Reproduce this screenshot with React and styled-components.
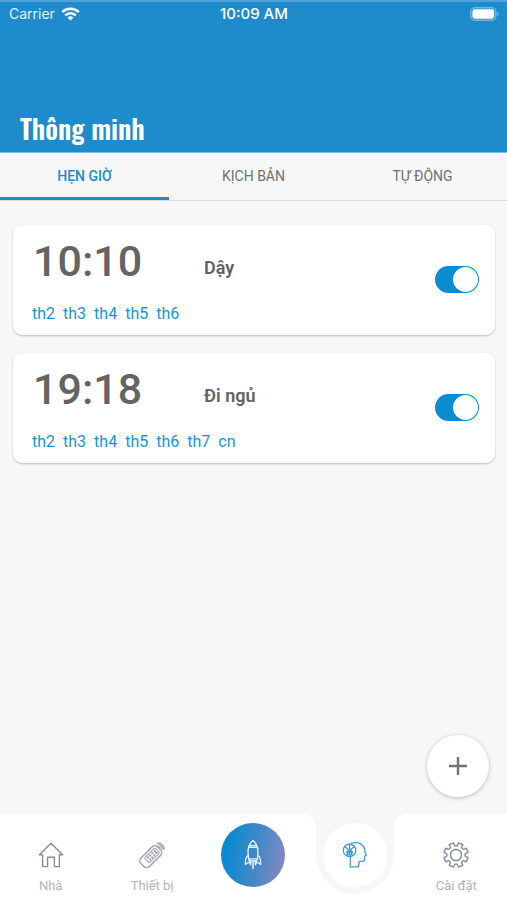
import React, { useState } from "react";
import styled, { createGlobalStyle } from "styled-components";

const blue = "#1e8bcc";
const accent = "#0a8cd3";
const canvas = "#f7f7f7";

const GlobalStyle = createGlobalStyle`
  *, *::before, *::after { box-sizing: border-box; }
  body { margin: 0; background: ${canvas}; font-family: Roboto, "Noto Sans", sans-serif; }
  button, input { font: inherit; margin: 0; }
`;

const Screen = styled.div`
  min-height: 100vh;
  display: flex;
  flex-direction: column;
`;

const Header = styled.header`
  height: 153px;
  display: flex;
  flex-direction: column;
  justify-content: space-between;
  background: ${blue};
  border-top: 2px solid #4fa5da;
  border-bottom: 1px solid #7dbce3;
`;

const StatusBar = styled.div`
  display: grid;
  grid-template-columns: 1fr auto 1fr;
  align-items: center;
  height: 24px;
  padding: 0 8px 0 9px;
  color: #fff;
  font-family: Inter, sans-serif;
  font-size: 14px;
  line-height: 24px;
`;

const Carrier = styled.span`
  display: flex;
  align-items: center;
  gap: 6px;
  color: #e4f2fb;
`;

const Clock = styled.time`
  font-size: 15px;
  font-weight: 500;
`;

const BatteryIcon = styled.svg`
  justify-self: end;
`;

const Title = styled.h1`
  margin: 0;
  padding: 0 20px 8px;
  color: #fff;
  font-family: "Oswald", "Liberation Sans Narrow", Roboto, sans-serif;
  font-size: 27px;
  line-height: 32px;
  font-weight: 600;
`;

const Tabs = styled.div`
  display: grid;
  grid-template-columns: repeat(3, 1fr);
  height: 48px;
  border-bottom: 1px solid #dedede;
`;

const Tab = styled.button`
  height: 47px;
  padding: 2px 0 0;
  border: 0;
  border-bottom: 3px solid ${(p) => (p.$active ? blue : "transparent")};
  background: none;
  color: ${(p) => (p.$active ? blue : "#707070")};
  font-size: 14px;
  font-weight: ${(p) => (p.$active ? 500 : 400)};
  cursor: pointer;
`;

const AlarmList = styled.ul`
  display: flex;
  flex-direction: column;
  gap: 18px;
  margin: 0;
  padding: 24px 12px 24px 13px;
  list-style: none;
`;

const AlarmCard = styled.li`
  display: grid;
  grid-template-columns: 171px 1fr auto;
  align-content: space-between;
  align-items: center;
  height: 110px;
  padding: 10px 16px 11px 20px;
  border-radius: 9px;
  background: #fff;
  box-shadow: 0 1px 2px rgba(0, 0, 0, 0.24);
`;

const Time = styled.time`
  color: #646464;
  font-size: 43px;
  line-height: 52px;
  font-weight: 500;
`;

const Name = styled.label`
  padding-top: 14px;
  color: #636363;
  font-size: 18px;
  line-height: 24px;
  font-weight: 600;
`;

const Days = styled.div`
  grid-column: 1 / 3;
  grid-row: 2;
  display: flex;
  gap: 8px;
  margin-left: -1px;
  color: #1b92d5;
  font-size: 16px;
  line-height: 20px;
`;

const Toggle = styled.input`
  grid-column: 3;
  grid-row: 1 / 3;
  appearance: none;
  display: flex;
  align-items: center;
  justify-content: ${(p) => (p.checked ? "flex-end" : "flex-start")};
  width: 44px;
  height: 27px;
  padding: 0 1px;
  border-radius: 14px;
  background: ${(p) => (p.checked ? accent : "#c4c4c4")};
  cursor: pointer;

  &::before {
    content: "";
    width: 25px;
    height: 25px;
    border-radius: 50%;
    background: #fff;
  }
`;

const AddButton = styled.button`
  display: grid;
  place-items: center;
  width: 62px;
  height: 62px;
  margin: auto 18px 17px auto;
  padding: 0;
  border: 0;
  border-radius: 50%;
  background: #fff;
  box-shadow: 0 1px 4px rgba(0, 0, 0, 0.24);
  cursor: pointer;
`;

const NavBar = styled.nav`
  display: grid;
  grid-template-columns: repeat(5, 1fr);
  height: 86px;
  background: #fff;
`;

const NavLink = styled.a`
  display: flex;
  flex-direction: column;
  align-items: center;
  gap: 6px;
  padding-top: 26px;
  color: #b3b3b3;
  font-size: 13px;
  line-height: 20px;
  text-decoration: none;
`;

const LaunchButton = styled.button`
  display: grid;
  place-items: center;
  justify-self: center;
  width: 64px;
  height: 64px;
  margin-top: 9px;
  padding: 0;
  border: 0;
  border-radius: 50%;
  background: linear-gradient(100deg, #0b8ad0 15%, #4788c8 58%, #9187c3 100%);
  cursor: pointer;
`;

const Notch = styled.div`
  position: relative;
  justify-self: center;
  width: 78px;
  height: 80px;
  padding: 9px 7px;
  border-radius: 0 0 39px 39px;
  background: ${canvas};

  &::before,
  &::after {
    content: "";
    position: absolute;
    top: 0;
    width: 12px;
    height: 12px;
  }
  &::before {
    right: 100%;
    background: radial-gradient(circle at 0 100%, #fff 11px, ${canvas} 12px);
  }
  &::after {
    left: 100%;
    background: radial-gradient(circle at 100% 100%, #fff 11px, ${canvas} 12px);
  }
`;

const ActiveLink = styled.a`
  display: grid;
  place-items: center;
  width: 64px;
  height: 64px;
  border-radius: 50%;
  background: #fff;
`;

const Wifi = () => (
  <svg width="19" height="14" viewBox="0 0 19 14" fill="none" stroke="#fff" strokeWidth="2.4" aria-hidden="true">
    <path d="M1.2 5.2a11.8 11.8 0 0 1 16.6 0" />
    <path d="M4.2 8.4a7.5 7.5 0 0 1 10.6 0" />
    <path d="M9.5 13.6 6.6 10.7a4.1 4.1 0 0 1 5.8 0Z" fill="#fff" stroke="none" />
  </svg>
);

const Battery = () => (
  <BatteryIcon width="29" height="14" viewBox="0 0 29 14" aria-hidden="true">
    <rect x="0.8" y="0.8" width="25" height="12.4" rx="4" fill="none" stroke="#74b7e1" strokeWidth="1.4" />
    <rect x="2.4" y="2.3" width="21.8" height="9.4" rx="2.4" fill="#fff" />
    <path d="M27 4.8q3 2.2 0 4.4Z" fill="#74b7e1" />
  </BatteryIcon>
);

const Home = () => (
  <svg width="26" height="30" viewBox="0 0 26 30" fill="none" stroke="#858b9b" strokeWidth="1.4" strokeLinejoin="round" aria-hidden="true">
    <path d="M13 3.2 1.4 14.8h3.2v11.8h5V17.2h6.8v9.4h5V14.8h3.2Z" />
  </svg>
);

const Remote = () => (
  <svg width="28" height="30" viewBox="0 0 28 30" fill="none" stroke="#a2a5ae" strokeLinecap="round" aria-hidden="true">
    <g transform="rotate(45 12.6 16.8)">
      <rect x="6.6" y="4.8" width="12" height="23.6" rx="4" strokeWidth="1.5" />
      <rect x="9.2" y="7.4" width="6.8" height="14.6" rx="1" strokeWidth="1.1" />
      <path d="M11 9.8h3.2M11 13h.6M14 13h.4M11 16h.6M14 16h.4M11 19h.6M14 19h.4" strokeWidth="2" />
    </g>
    <path d="M19.2 3.2c3-1.8 7.6 2 7.2 6.2-1.4 0-2.2-.3-2.8-1-1-2.8-2.2-3.6-4.4-5.2Z" fill="#b4b6be" strokeWidth="0.8" />
    <path d="M19.6 6.2q2.2.6 2.6 2.8" strokeWidth="1.2" />
  </svg>
);

const Rocket = () => (
  <svg width="20" height="32" viewBox="0 0 20 32" fill="none" stroke="#eaf6ff" strokeWidth="1.3" strokeLinejoin="round" strokeLinecap="round" aria-hidden="true">
    <path d="M10 1.6C7 4.2 5.3 7.4 5.1 11c-.2 4 .1 7.6 1 10.8h7.8c.9-3.2 1.2-6.8 1-10.8-.2-3.6-1.9-6.8-4.9-9.4Z" />
    <path d="M7 6.6h6M6.2 8.4h7.6" />
    <path d="M5.2 16.6C3 17.6 2.2 19.8 2.4 25.4l2-1.6h2.2v-2M14.8 16.6c2.2 1 3 3.2 2.8 8.8l-2-1.6h-2.2v-2" />
    <path d="M6.4 19.8h7.2" />
    <path d="M7.6 22v3.8M10 22v7.4M12.4 22v3.8" strokeWidth="1.5" />
  </svg>
);

const SmartHead = () => (
  <svg width="26" height="30" viewBox="0 0 26 30" fill="none" stroke="#3d9fd8" strokeWidth="1.3" strokeLinejoin="round" strokeLinecap="round" aria-hidden="true">
    <path d="M9.2 3.4C16 .8 22.7 4.9 22.8 11c0 1.4.5 2.2 1.5 4.2l-1.6.9v3.4c0 1.4-.8 1.8-2 1.8h-3.5l-.7 5.6H8.2l.2-9.4" />
    <circle cx="7.6" cy="10.4" r="6.3" />
    <path d="M7.6 4.4v5M3.4 7l2.8 2.2q.6 2-1.8 3.2M11.8 7 9 9.2q-.6 2 1.8 3.2M4.6 15l3-4.4 3 4.4ZM7.6 11v4" />
  </svg>
);

const gearPath = (() => {
  const teeth = 8;
  const at = (r, degrees) => {
    const a = (degrees * Math.PI) / 180;
    return `${(15 + r * Math.sin(a)).toFixed(2)} ${(15 - r * Math.cos(a)).toFixed(2)}`;
  };
  let d = "";
  for (let i = 0; i < teeth; i++) {
    const c = i * 45 + 22.5;
    d += `${i ? "L" : "M"}${at(9.5, c - 14)}L${at(12.3, c - 11)}L${at(12.3, c + 11)}L${at(9.5, c + 14)}`;
    d += `Q${at(8.4, c + 22.5)} ${at(9.5, c + 31)}`;
  }
  return `${d}Z`;
})();

const Gear = () => (
  <svg width="30" height="30" viewBox="0 0 30 30" fill="none" stroke="#858b9b" strokeWidth="1.4" strokeLinejoin="round" aria-hidden="true">
    <path d={gearPath} />
    <circle cx="15" cy="15" r="5.5" />
  </svg>
);

const Plus = () => (
  <svg width="20" height="20" viewBox="0 0 20 20" stroke="#737373" strokeWidth="2.4" aria-hidden="true">
    <path d="M10 1v18M1 10h18" />
  </svg>
);

const tabs = ["HẸN GIỜ", "KỊCH BẢN", "TỰ ĐỘNG"];

const alarms = [
  { id: "wake", time: "10:10", name: "Dậy", days: ["th2", "th3", "th4", "th5", "th6"] },
  { id: "sleep", time: "19:18", name: "Đi ngủ", days: ["th2", "th3", "th4", "th5", "th6", "th7", "cn"] },
];

function Alarm({ alarm }) {
  const [on, setOn] = useState(true);
  return (
    <AlarmCard>
      <Time>{alarm.time}</Time>
      <Name htmlFor={alarm.id}>{alarm.name}</Name>
      <Days>
        {alarm.days.map((day) => (
          <span key={day}>{day}</span>
        ))}
      </Days>
      <Toggle id={alarm.id} type="checkbox" checked={on} onChange={() => setOn(!on)} />
    </AlarmCard>
  );
}

export default function App() {
  const [active, setActive] = useState(0);
  return (
    <Screen>
      <GlobalStyle />
      <Header>
        <StatusBar>
          <Carrier>
            Carrier
            <Wifi />
          </Carrier>
          <Clock>10:09 AM</Clock>
          <Battery />
        </StatusBar>
        <Title>Thông minh</Title>
      </Header>
      <Tabs role="tablist">
        {tabs.map((label, i) => (
          <Tab key={label} type="button" role="tab" aria-selected={i === active} $active={i === active} onClick={() => setActive(i)}>
            {label}
          </Tab>
        ))}
      </Tabs>
      <AlarmList>
        {alarms.map((alarm) => (
          <Alarm key={alarm.id} alarm={alarm} />
        ))}
      </AlarmList>
      <AddButton type="button" aria-label="Thêm">
        <Plus />
      </AddButton>
      <NavBar>
        <NavLink href="#home">
          <Home />
          Nhà
        </NavLink>
        <NavLink href="#devices">
          <Remote />
          Thiết bị
        </NavLink>
        <LaunchButton type="button" aria-label="Khởi chạy">
          <Rocket />
        </LaunchButton>
        <Notch>
          <ActiveLink href="#smart" aria-label="Thông minh" aria-current="page">
            <SmartHead />
          </ActiveLink>
        </Notch>
        <NavLink href="#settings">
          <Gear />
          Cài đặt
        </NavLink>
      </NavBar>
    </Screen>
  );
}
